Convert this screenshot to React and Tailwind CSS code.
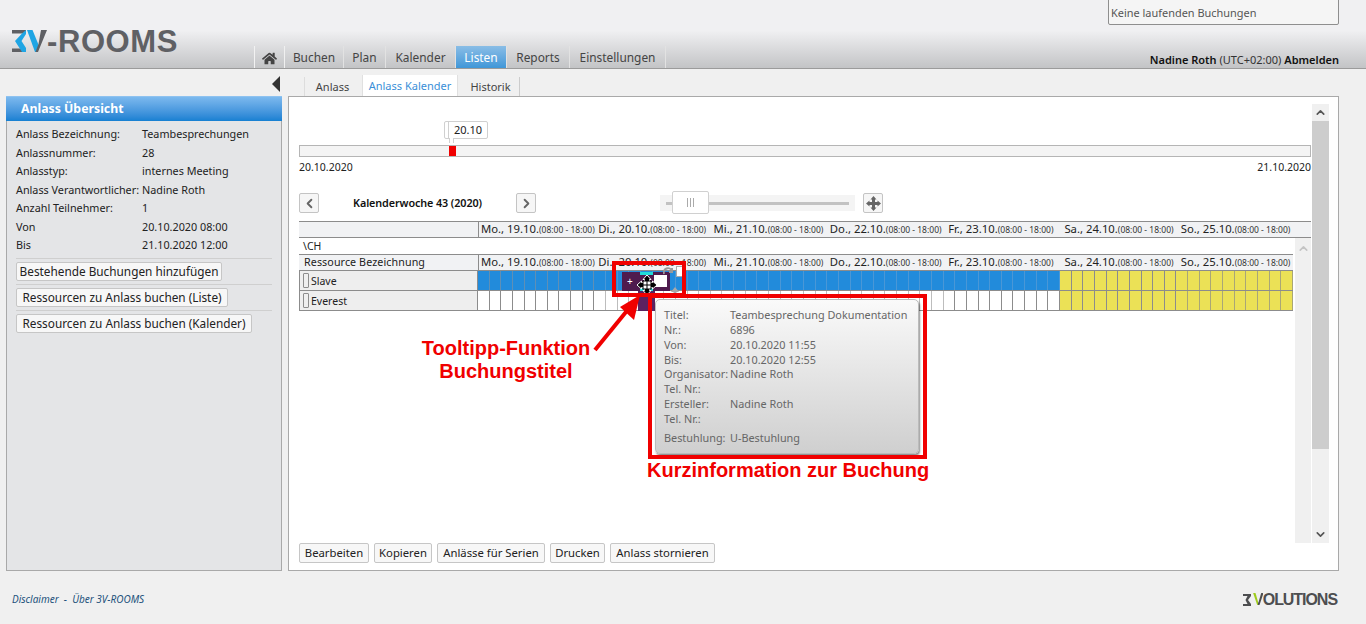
import React from "react";
import { ChevronUp, ChevronDown, ChevronLeft, ChevronRight } from "lucide-react";
import { FaHome } from "react-icons/fa";

const sans = "font-['Noto_Sans','Open_Sans',sans-serif]";
const days = [
  ["Mo., 19.10.", "pl-[2px]"],
  ["Di., 20.10.", "pl-[3px]"],
  ["Mi., 21.10.", "pl-[2px]"],
  ["Do., 22.10.", "pl-[2px]"],
  ["Fr., 23.10.", "pl-[4px]"],
  ["Sa., 24.10.", "pl-[4px]"],
  ["So., 25.10.", "pl-[4px]"],
];
const info = [
  ["Anlass Bezeichnung:", "Teambesprechungen"],
  ["Anlassnummer:", "28"],
  ["Anlasstyp:", "internes Meeting"],
  ["Anlass Verantwortlicher:", "Nadine Roth"],
  ["Anzahl Teilnehmer:", "1"],
  ["Von", "20.10.2020 08:00"],
  ["Bis", "21.10.2020 12:00"],
];
const tip = [
  ["Titel:", "Teambesprechung Dokumentation"],
  ["Nr.:", "6896"],
  ["Von:", "20.10.2020 11:55"],
  ["Bis:", "20.10.2020 12:55"],
  ["Organisator:", "Nadine Roth"],
  ["Tel. Nr.:", ""],
  ["Ersteller:", "Nadine Roth"],
  ["Tel. Nr.:", ""],
];
const nav = [
  ["Buchen", "w-[59px]"],
  ["Plan", "w-[42px]"],
  ["Kalender", "w-[70px]"],
  ["Listen", "w-[51px]"],
  ["Reports", "w-[63px]"],
  ["Einstellungen", "w-[96px]"],
];

function Logo() {
  return (
    <div className="flex items-center h-[26px]">
      <svg width="35" height="22" viewBox="0 0 35 22" className="shrink-0">
        <polygon points="0,0 14,0 14,3.5 0,3.5" fill="#5f6064" />
        <polygon points="0,18.5 12,18.5 12,22 0,22" fill="#5f6064" />
        <polygon points="14,0 14,4 9.5,11 14,18 14,22 10,22 3,11 10,3.5" fill="#1fa5e4" />
        <polygon points="15,0 20.5,0 27,16 24.5,22 23,22" fill="#1fa5e4" />
        <polygon points="29,0 35,0 26,22 23.5,22 26.5,14" fill="#5f6064" />
      </svg>
      <span className="font-['Liberation_Sans',sans-serif] font-bold text-[31px] leading-none text-[#5f6064] tracking-[0.6px]">-ROOMS</span>
    </div>
  );
}

function DayHeader() {
  return (
    <div className="flex w-[815px] h-full items-center border-l border-[#8c8c8c]">
      {days.map(([d, p]) => (
        <div key={d} className={"w-[116.43px] whitespace-nowrap text-[11.3px] text-[#222] " + p}>
          {d}
          <span className="text-[8.5px] text-[#333]">(08:00 - 18:00)</span>
        </div>
      ))}
    </div>
  );
}

function Cells({ blue }) {
  return (
    <div className="flex w-[815px] h-full">
      {Array.from({ length: 70 }).map((_, i) => {
        let c;
        if (i >= 60) c = "bg-[#ebe156] border-[#a9a677]";
        else if (i >= 50) c = "bg-[#ebe156] border-[#8c8c8c]";
        else if (blue) c = i < 10 ? "bg-[#228bdb] border-[#5f8fb5]" : "bg-[#228bdb] border-[#4a97d6]";
        else c = i < 10 || i >= 40 ? "bg-white border-[#8c8c8c]" : "bg-white border-[#bdbdbd]";
        return <div key={i} className={"flex-1 border-r " + c} />;
      })}
    </div>
  );
}

function Btn({ children, className = "" }) {
  return (
    <div className={"flex items-center justify-center whitespace-nowrap border border-[#c6c6c6] rounded-[2px] bg-[#f7f7f7] text-[#222] " + className}>
      {children}
    </div>
  );
}

export default function App() {
  return (
    <div className={"w-[1366px] h-[624px] overflow-hidden relative bg-[#f0f0f0] " + sans}>
      {/* Header */}
      <header className="h-[69px] border-b border-[#9b9b9b] bg-gradient-to-b from-[#f0f0f2] from-45% to-[#c3c4c6] relative flex items-end">
        <div className="absolute right-[27px] top-[-1px] w-[231px] h-[26px] border border-[#8e8e8e] rounded-b-[2px] bg-[#f5f5f5] flex items-end pb-[3px] pl-[2px] text-[10.95px] text-[#555]">
          Keine laufenden Buchungen
        </div>
        <div className="w-[254px] self-start pt-[28px] pl-[12px]">
          <Logo />
        </div>
        <nav className="flex h-[22px] border-l border-[#f2f2f2] text-[11.9px] text-[#444]">
          <div className="w-[30px] flex items-center justify-center border-r border-[#f0f0f0] pt-[2px]">
            <FaHome size={15} color="#444" />
          </div>
          {nav.map(([n, w]) => (
            <div
              key={n}
              className={
                w + " flex items-center justify-center pt-[2px] border-r border-[#e2e2e2] " +
                (n === "Listen" ? "bg-gradient-to-b from-[#89bde6] to-[#3f97d8] text-white" : "")
              }
            >
              {n}
            </div>
          ))}
        </nav>
        <div className="ml-auto mr-[27px] text-[11px] text-[#111] whitespace-nowrap">
          <b className="font-semibold">Nadine Roth</b> <span className="text-[#333]">(UTC+02:00)</span> <b className="font-semibold">Abmelden</b>
        </div>
      </header>

      {/* Body */}
      <div className="flex pl-[6px] gap-[6px] pt-[6px]">
        <div className="w-[276px] shrink-0 flex flex-col">
          <div className="h-[21px] flex justify-end pr-[2px]">
            <div className="w-0 h-0 mt-[1px] border-y-[8px] border-y-transparent border-r-[8px] border-r-[#333]" />
          </div>
          <aside className="h-[475px] border border-[#a9a9a9] bg-[#e4e5e7]">
            <div className="h-[25px] -mt-px -mx-px pt-px border-t border-[#8ec2f0] bg-gradient-to-b from-[#7cb9ee] to-[#1580d2] text-white font-bold text-[12.3px] flex items-center pl-[15px]">
              Anlass Übersicht
            </div>
            <div className="pt-[4px] px-[9px] text-[10.8px] text-[#222]">
              {info.map(([a, b]) => (
                <div key={a} className="flex h-[18.5px] items-center whitespace-nowrap">
                  <span className="w-[126px] shrink-0">{a}</span>
                  <span>{b}</span>
                </div>
              ))}
              <div className="mt-[3px] flex flex-col text-[11.8px]">
                <div className="border-t border-[#cfcfcf] h-[26px] pt-[3px]">
                  <Btn className="w-[206px] h-[19px] pt-px">Bestehende Buchungen hinzufügen</Btn>
                </div>
                <div className="border-t border-[#cfcfcf] h-[26px] pt-[3px]">
                  <Btn className="w-[212px] h-[19px] pt-px">Ressourcen zu Anlass buchen (Liste)</Btn>
                </div>
                <div className="border-t border-[#cfcfcf] h-[26px] pt-[3px]">
                  <Btn className="w-[236px] h-[19px] pt-px">Ressourcen zu Anlass buchen (Kalender)</Btn>
                </div>
              </div>
            </div>
          </aside>
        </div>

        <div className="w-[1051px] shrink-0 flex flex-col">
          <div className="h-[21px] flex items-end pl-[16px] text-[11px] text-[#444]">
            <div className="w-[58px] h-[19px] flex items-center justify-center pr-[2px] pt-px border-l border-[#ddd]">Anlass</div>
            <div className="w-[96px] h-[21px] flex items-center justify-center pt-[2px] bg-white border-x border-[#e0e0e0] text-[#3a8fd8]">Anlass Kalender</div>
            <div className="w-[62px] h-[19px] flex items-center justify-center pl-[4px] pt-px border-r border-[#ccc]">Historik</div>
          </div>
          <main className="h-[475px] border border-[#a9a9a9] bg-white flex pt-[7px] pl-[10px]">
            {/* Content */}
            <div className="w-[1012px] shrink-0 flex flex-col">
              {/* Range slider */}
              <div className="h-[18px] mt-[17px] flex pl-[145px]">
                <div className="relative w-[44px] h-[18px] border border-[#d0d0d0] rounded-[2px] bg-white text-[11px] text-[#222] flex items-center justify-center pl-[4px]">
                  <div className="absolute left-[3px] inset-y-0 border-l border-[#d0d0d0]" />
                  <div className="absolute left-[4px] top-[16px] w-[5px] h-[5px] border-x border-[#d0d0d0] bg-white" />
                  20.10
                </div>
              </div>
              <div className="mt-[6px] h-[12px] border border-[#b5b5b5] bg-[#f4f4f4] pl-[149px]">
                <div className="w-[7px] h-full bg-[#f00000]" />
              </div>
              <div className="mt-[3px] flex justify-between text-[10.5px] text-[#222] h-[15px] items-center">
                <span>20.10.2020</span>
                <span>21.10.2020</span>
              </div>
              {/* Week nav */}
              <div className="mt-[18px] h-[20px] flex items-center">
                <div className="w-[20px] h-[20px] border border-[#c4c4c4] rounded-[2px] bg-[#f6f6f6] flex items-center justify-center">
                  <ChevronLeft size={15} strokeWidth={3} color="#666" />
                </div>
                <div className="w-[197px] pt-px text-center font-semibold text-[10.8px] text-[#111] tracking-[-0.1px]">Kalenderwoche 43 (2020)</div>
                <div className="w-[20px] h-[20px] border border-[#c4c4c4] rounded-[2px] bg-[#f6f6f6] flex items-center justify-center">
                  <ChevronRight size={15} strokeWidth={3} color="#666" />
                </div>
                <div className="ml-[124px] w-[195px] h-[16px] bg-[#f4f4f4] relative flex items-center px-[6px]">
                  <div className="w-full h-[3px] bg-[#c2c2c2]" />
                  <div className="absolute left-[12px] top-[-4px] w-[37px] h-[23px] border border-[#d0d0d0] rounded-[2px] bg-white flex items-center justify-center gap-[2px]">
                    <span className="w-px h-[9px] bg-[#aaa]" />
                    <span className="w-px h-[9px] bg-[#aaa]" />
                    <span className="w-px h-[9px] bg-[#aaa]" />
                  </div>
                </div>
                <div className="ml-[8px] w-[20px] h-[20px] border border-[#c4c4c4] rounded-[2px] bg-[#f6f6f6] flex items-center justify-center">
                  <svg width="15" height="15" viewBox="0 0 15 15">
                    <path d="M7.5 0 L10.5 3.5 H9 V6 H11.5 V4.5 L15 7.5 L11.5 10.5 V9 H9 V11.5 H10.5 L7.5 15 L4.5 11.5 H6 V9 H3.5 V10.5 L0 7.5 L3.5 4.5 V6 H6 V3.5 H4.5 Z" fill="#666" />
                  </svg>
                </div>
              </div>
              {/* Calendar head */}
              <div className="mt-[8px] h-[17px] border-y border-[#8c8c8c] bg-[#f1f2f4] flex items-center">
                <div className="w-[179px] shrink-0" />
                <DayHeader />
              </div>
              <div className="flex flex-1 min-h-0">
                <div className="w-[994px] shrink-0 flex flex-col">
                  <div className="h-[16px] flex items-center pl-[4px] pt-[2px] text-[10.5px] text-[#222]">\CH</div>
                  <div className="h-[17px] border-y border-[#8c8c8c] bg-[#f1f2f4] flex items-center">
                    <div className="w-[179px] shrink-0 pl-[5px] text-[10.7px] text-[#222] tracking-[0.1px]">Ressource Bezeichnung</div>
                    <DayHeader />
                  </div>
                  {[
                    ["Slave", true],
                    ["Everest", false],
                  ].map(([n, b]) => (
                    <div key={n} className="h-[20px] border-b border-[#8c8c8c] flex">
                      <div className="w-[179px] shrink-0 bg-[#eeeeee] border-l border-r border-[#8c8c8c] flex items-center pl-[3px] gap-[2px] text-[10.5px] text-[#222]">
                        <span className="w-[6px] h-[15px] border border-[#8c8c8c] rounded-[1px]" />
                        <span className="pt-[2px]">{n}</span>
                      </div>
                      <Cells blue={b} />
                    </div>
                  ))}
                  <div className="flex-1" />
                  <div className="flex gap-[5px] text-[11.3px] pb-[7px]">
                    <Btn className="w-[70px] h-[20px]">Bearbeiten</Btn>
                    <Btn className="w-[58px] h-[20px]">Kopieren</Btn>
                    <Btn className="w-[108px] h-[20px]">Anlässe für Serien</Btn>
                    <Btn className="w-[55px] h-[20px]">Drucken</Btn>
                    <Btn className="w-[105px] h-[20px]">Anlass stornieren</Btn>
                  </div>
                </div>
                <div className="w-[16px] ml-[2px] h-[305px] bg-[#f0f0f0] flex flex-col items-center pt-[4px]">
                  <ChevronUp size={13} strokeWidth={3} color="#c4c4c4" />
                </div>
              </div>
            </div>
            {/* Outer scrollbar */}
            <div className="w-[17px] h-[439px] ml-[1px] bg-[#f0f0f0] flex flex-col">
              <div className="h-[17px] flex items-center justify-center">
                <ChevronUp size={13} strokeWidth={3} color="#555" />
              </div>
              <div className="h-[328px] bg-[#cdcdcd]" />
              <div className="mt-auto h-[17px] flex items-center justify-center">
                <ChevronDown size={13} strokeWidth={3} color="#555" />
              </div>
            </div>
          </main>
        </div>
      </div>

      {/* Footer */}
      <footer className="flex items-center justify-between pl-[12px] pr-[29px] h-[53px] pt-[4px]">
        <div className="italic text-[10px] text-[#23527c]">Disclaimer&nbsp; - &nbsp;Über 3V-ROOMS</div>
        <div className="flex items-center font-['Liberation_Sans',sans-serif] font-bold text-[16px] leading-none text-[#4d4e50] tracking-[-1.05px]">
          <svg width="10" height="12" viewBox="0 0 10 12" className="shrink-0">
            <polygon points="0,0 8,0 8,2 5,6 8,10 8,12 0,12 0,10 4.5,10 2.5,6 4.5,2 0,2" fill="#4d4e50" />
          </svg>
          <span className="bg-gradient-to-r from-[#9ecb1c] from-50% to-[#4d4e50] to-50% bg-clip-text text-transparent">V</span>
          OLUTIONS
        </div>
      </footer>

      {/* Bookings over the calendar */}
      <div className="absolute left-[622px] top-[272px] w-[48px] h-[19px] bg-[#4f1b4e] flex items-center text-white text-[10px] pl-[5px]">+</div>
      <div className="absolute left-[654px] top-[275px] w-[13px] h-[12px] bg-white" />
      <div className="absolute left-[640px] top-[272px] w-[13px] h-[3px] bg-[#20dcd8]" />
      <div className="absolute left-[640px] top-[288px] w-[13px] h-[3px] bg-[#20dcd8]" />
      <div className="absolute left-[638px] top-[291px] w-[17px] h-[20px] bg-[#5c2160]" />
      <div className="absolute left-[676px] top-[266px] w-[8px] h-[11px] border border-[#aaa] bg-white" />
      <svg className="absolute left-[663px] top-[267px]" width="11" height="9" viewBox="0 0 11 9">
        <path d="M1 7 A4 4 0 0 1 9 4 M9 1 V5 H6" fill="none" stroke="#9a9a9a" strokeWidth="2" />
      </svg>
      <svg className="absolute left-[670px] top-[287px]" width="10" height="9" viewBox="0 0 10 9">
        <path d="M5 0 L9 5 H6.5 V9 H3.5 V5 H1 Z" fill="#a9a9a9" />
      </svg>
      <svg className="absolute left-[637px] top-[275px]" width="20" height="20" viewBox="0 0 20 20">
        <path d="M10 0 L14 4.5 H12.5 V7.5 H15.5 V6 L20 10 L15.5 14 V12.5 H12.5 V15.5 H14 L10 20 L6 15.5 H7.5 V12.5 H4.5 V14 L0 10 L4.5 6 V7.5 H7.5 V4.5 H6 Z" fill="#000" stroke="#fff" strokeWidth="1" />
        <rect x="6" y="6" width="8" height="8" fill="#fff" stroke="#000" strokeWidth="1" />
        <path d="M10 6 V14 M6 10 H14" stroke="#000" strokeWidth="1" />
      </svg>

      {/* Tooltip */}
      <div className="absolute left-[655px] top-[299px] w-[264px] h-[155px] rounded-[5px] border border-[#bbb] bg-gradient-to-b from-[#fafafa] to-[#cfcfcf] shadow-[1px_2px_2px_rgba(0,0,0,0.45)] pt-[8px] pl-[8px] text-[10.85px] text-[#666]">
        {tip.map(([a, b], i) => (
          <div key={i} className="flex h-[14.75px] items-center whitespace-nowrap">
            <span className="w-[66px] shrink-0">{a}</span>
            <span>{b}</span>
          </div>
        ))}
        <div className="flex h-[14.75px] items-center mt-[5px] whitespace-nowrap">
          <span className="w-[66px] shrink-0">Bestuhlung:</span>
          <span>U-Bestuhlung</span>
        </div>
      </div>

      {/* Red annotations */}
      <div className="absolute left-[612px] top-[261px] w-[74px] h-[36px] border-[4px] border-[#f00000]" />
      <div className="absolute left-[648px] top-[294px] w-[279px] h-[165px] border-[4px] border-[#f00000]" />
      <svg className="absolute left-[590px] top-[290px]" width="60" height="65" viewBox="0 0 60 65">
        <line x1="5" y1="60" x2="40" y2="17" stroke="#f00000" strokeWidth="4" />
        <polygon points="50,5 30,17 44,30" fill="#f00000" />
      </svg>
      <div className="absolute left-[400px] top-[337px] w-[212px] text-center font-['Liberation_Sans',sans-serif] font-bold text-[20px] leading-[23px] text-[#f00000]">
        Tooltipp-Funktion
        <br />
        Buchungstitel
      </div>
      <div className="absolute left-[647px] top-[459px] font-['Liberation_Sans',sans-serif] font-bold text-[20px] leading-[23px] text-[#f00000] whitespace-nowrap">
        Kurzinformation zur Buchung
      </div>
    </div>
  );
}
